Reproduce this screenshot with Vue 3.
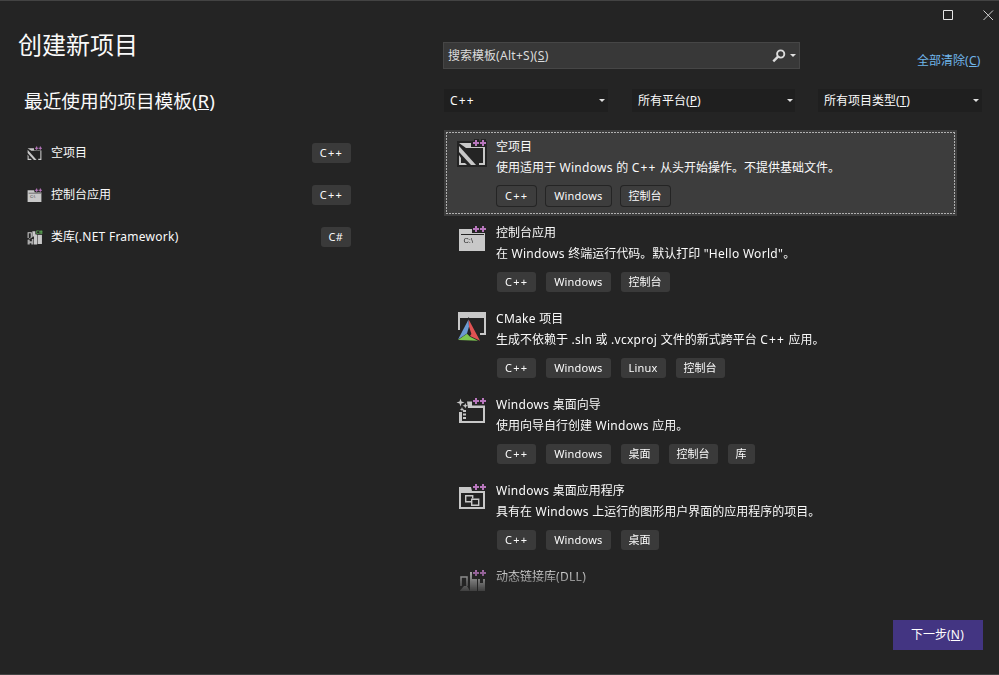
<script setup>
import { h, ref } from 'vue'

const recent = [
  { name: '空项目', icon: 'empty', lang: 'C++' },
  { name: '控制台应用', icon: 'console', lang: 'C++' },
  { name: '类库(.NET Framework)', icon: 'library', lang: 'C#' }
]

const filters = [
  { text: 'C++' },
  { text: '所有平台', key: 'P' },
  { text: '所有项目类型', key: 'T' }
]

const templates = [
  { name: '空项目', icon: 'empty', desc: '使用适用于 Windows 的 C++ 从头开始操作。不提供基础文件。', tags: ['C++', 'Windows', '控制台'] },
  { name: '控制台应用', icon: 'console', desc: '在 Windows 终端运行代码。默认打印 "Hello World"。', tags: ['C++', 'Windows', '控制台'] },
  { name: 'CMake 项目', icon: 'cmake', desc: '生成不依赖于 .sln 或 .vcxproj 文件的新式跨平台 C++ 应用。', tags: ['C++', 'Windows', 'Linux', '控制台'] },
  { name: 'Windows 桌面向导', icon: 'wizard', desc: '使用向导自行创建 Windows 应用。', tags: ['C++', 'Windows', '桌面', '控制台', '库'] },
  { name: 'Windows 桌面应用程序', icon: 'desktop', desc: '具有在 Windows 上运行的图形用户界面的应用程序的项目。', tags: ['C++', 'Windows', '桌面'] },
  { name: '动态链接库(DLL)', icon: 'dll', desc: '', tags: [] }
]

const selected = ref(0)

// Latin runs get slightly wider tracking than the Chinese text around them
function Txt(props) {
  const parts = props.text.match(/C\+\+|[\x20-\x7e]+?(?=C\+\+|[^\x20-\x7e]|$)|[^\x20-\x7e]+/g) || []
  return h('span', { class: 'txt' }, parts.map(p => {
    const cls = p === 'C++' ? 'cpp' : /^[\x20-\x7e]/.test(p) ? 'latin' : 'han'
    return h('span', { class: cls }, p)
  }))
}
Txt.props = ['text']

const light = '#c8c8c8'
const dark = '#242424'
const rect = (x, y, width, height, fill = light) => h('rect', { x, y, width, height, fill })
const path = (d, fill = light, extra = {}) => h('path', { d, fill, ...extra })
const line = (d, stroke = light, w = 2) => path(d, 'none', { stroke, 'stroke-width': w })

const plus = () => [
  path('M16 4h2V2h5v2h2V2h5v2h1v4h-1v2h-5V8h-2v2h-5V8h-2z', dark),
  path('M19 3h2v2h2v2h-2v2h-2V7h-2V5h2zM26 3h2v2h2v2h-2v2h-2V7h-2V5h2z', '#b877bd')
]

const art = {
  empty: () => [
    rect(1, 4, 30, 26, dark),
    path('M3 6h12v4h14v18h-6v-2h4V11H10z'),
    path('M3 9l17 19h-5L3 15z'),
    path('M3 18l2 3v5h4l2 2H3z'),
    ...plus()
  ],
  console: () => [
    path('M3 6h13v4h13v18H3z'),
    rect(5, 11, 23, 1, dark),
    h('text', { x: 7.4, y: 20, fill: dark, 'font-size': 7.5, 'font-family': 'Liberation Sans, sans-serif' }, 'C:\\'),
    ...plus()
  ],
  cmake: () => [
    rect(2, 3, 28, 6),
    line('M3 8v13M29 8v17h-5'),
    path('M12.7 8L0 31h26z', dark),
    path('M12.5 10.5L2 30.5l9-6 2-7z', '#6c9bd2'),
    path('M12.7 10.5L24 31.7l-10-4.7 1.4-2-2.4-7.5z', '#e05252'),
    path('M2 31l9-6.3 3 3 8 4z', '#7ec850')
  ],
  wizard: () => [
    path('M11 6.5h5v4h13V28H3V17h3v9h21V13H12z'),
    path('M7 15h3v2H7zM7 18.5h3v2H7zM7 22h3v2H7z'),
    path('M4.5 3.5l1 3 3 1-3 1-1 3-1-3-3-1 3-1zM9.3 8l.8 2 2 .8-2 .8-.8 2-.8-2-2-.8 2-.8zM6 12l.6 1.7 1.7.6-1.7.6L6 16.6l-.6-1.7-1.7-.6 1.7-.6z'),
    ...plus()
  ],
  desktop: () => [
    path('M3 6h12l1 4h13v18H3zM5 12v14h22V12z', light, { 'fill-rule': 'evenodd' }),
    line('M9.7 14.7h7v6h-7z', light, 1.4),
    rect(15, 17.5, 8, 7.5, dark),
    line('M15.7 18.2h7v6h-7z', light, 1.4),
    ...plus()
  ],
  dll: () => [
    line('M5 19V10h6v9', light, 1.5),
    path('M2 26l6-7h3l3 5v4H2zM14 5h2v22h-2zM16 12h5v15h-5zM22 12h2v4h3v-4h2v16h-7z'),
    ...plus()
  ],
  library: () => [
    line('M4 17V7h6v9', light, 2),
    path('M12 4h6v6h3v19h-6V14h-3zM22 11h8v17h-8z'),
    path('M3 20h4v3h4v-4h3v10h-4v-2H7v2H3z', '#aaa'),
    line('M5 19l8-5', '#aaa', 1.5),
    path('M18 2h13v8H18z', dark),
    line('M24 3.5h-4v5h4M26.5 2.5v7M29.5 2.5v7M25 4.5h6M25 7.5h6', '#5fae57', 1.4)
  ]
}

function Icon(props) {
  return h('svg', { viewBox: '0 0 32 32', width: props.size, height: props.size }, art[props.name]())
}
Icon.props = ['name', 'size']
</script>

<template>
  <div class="dialog">
    <aside class="side">
      <h1>创建新项目</h1>
      <h2>最近使用的项目模板(<u>R</u>)</h2>
      <ul class="recent">
        <li v-for="r in recent" :key="r.name">
          <Icon :name="r.icon" :size="17" />
          <Txt class="recent-name" :text="r.name" />
          <span class="tag"><Txt :text="r.lang" /></span>
        </li>
      </ul>
    </aside>

    <main class="main">
      <div class="controls">
        <svg width="11" height="11" viewBox="0 0 11 11"><path d="M.5.5h9v9h-9z" fill="none" stroke="#e6e6e6" /></svg>
        <svg width="11" height="11" viewBox="0 0 11 11"><path d="M.5.5l9.5 9.5M10 .5L.5 10" fill="none" stroke="#d0d0d0" /></svg>
      </div>

      <div class="search-row">
        <div class="search">
          <span class="search-text">搜索模板<span class="latin">(Alt+S)(<u>S</u>)</span></span>
          <svg width="14" height="14" viewBox="0 0 14 14">
            <circle cx="8.7" cy="5" r="3.6" fill="none" stroke="#dcdcdc" stroke-width="1.9" />
            <path d="M6 7.7L1.3 12.4" stroke="#dcdcdc" stroke-width="2.4" />
          </svg>
          <i class="arrow"></i>
        </div>
        <a class="clear">全部清除<span class="latin">(<u>C</u>)</span></a>
      </div>

      <div class="filters">
        <div v-for="f in filters" :key="f.text" class="combo">
          <span><Txt :text="f.text" /><template v-if="f.key">(<u>{{ f.key }}</u>)</template></span>
          <i class="arrow"></i>
        </div>
      </div>

      <ul class="list">
        <li
          v-for="(t, i) in templates"
          :key="t.name"
          class="item"
          :class="{ selected: i === selected }"
          @click="selected = i"
        >
          <Icon :name="t.icon" :size="32" />
          <div class="info">
            <Txt class="name" :text="t.name" />
            <Txt class="desc" :text="t.desc" />
            <div class="tags">
              <span v-for="tag in t.tags" :key="tag" class="tag"><Txt :text="tag" /></span>
            </div>
          </div>
        </li>
      </ul>

      <div class="footer">
        <button class="next">下一步<span class="latin">(<u>N</u>)</span></button>
      </div>
    </main>
  </div>
</template>

<style>
body {
  margin: 0;
  background: #242424;
}
</style>

<style scoped>
.dialog {
  display: flex;
  box-sizing: border-box;
  width: 999px;
  height: 675px;
  overflow: hidden;
  background: #242424;
  border-top: 1px solid #434343;
  border-bottom: 1px solid #434343;
  color: #fafafa;
  font: 12px/18px "Noto Sans", "Noto Sans CJK SC", sans-serif;
  white-space: pre;
}

u {
  text-underline-offset: 1px;
  text-decoration-thickness: 1px;
}

ul {
  list-style: none;
  margin: 0;
  padding: 0;
}

svg {
  display: block;
  flex: none;
}

:deep(.latin),
.latin {
  letter-spacing: 0.3px;
}

:deep(.cpp) {
  letter-spacing: 1.2px;
}

.side {
  width: 443px;
  flex: none;
}

h1 {
  margin: 26px 0 0 18px;
  font-size: 24px;
  line-height: 36px;
  font-weight: 400;
}

h2 {
  margin: 24px 0 0 24px;
  font-size: 18.67px;
  line-height: 28px;
  font-weight: 400;
}

.recent {
  width: 325px;
  margin: 17px 0 0 26px;
}

.recent li {
  display: flex;
  align-items: center;
  height: 42px;
}

.recent-name {
  margin-left: 8px;
  flex: 1;
}

.recent :deep(.latin) {
  letter-spacing: 0.25px;
}

.tag {
  box-sizing: border-box;
  height: 20px;
  padding: 0 8px;
  border-radius: 3px;
  background: #3a3a3a;
  font-size: 11px;
  line-height: 20px;
}

.tag :deep(.latin) {
  letter-spacing: 0.2px;
}

.main {
  flex: 1;
  display: flex;
  flex-direction: column;
}

.controls {
  display: flex;
  justify-content: flex-end;
  gap: 29px;
  height: 32px;
  padding: 9px 5px 0 0;
}

.search-row {
  display: flex;
  height: 27px;
}

.search {
  box-sizing: border-box;
  display: flex;
  align-items: center;
  width: 357px;
  padding: 0 3px 0 4px;
  background: #383838;
  border: 1px solid #464646;
  color: #dcdcdc;
}

.search-text {
  flex: 1;
}

.search .arrow {
  margin-left: 4px;
}

.clear {
  margin: 10px 0 0 117px;
  color: #70b5ea;
}

.arrow {
  border: 3px solid transparent;
  border-top-color: #e0e0e0;
  border-bottom: 0;
}

.filters {
  display: flex;
  gap: 23px;
  margin: 20px 0 0 1px;
}

.combo {
  box-sizing: border-box;
  display: flex;
  align-items: center;
  justify-content: space-between;
  width: 164px;
  height: 23px;
  padding: 0 3px 0 6px;
  background: #1f1f1f;
}

.combo:nth-child(2) {
  width: 163px;
  margin-left: 1px;
  padding-right: 2px;
}

.list {
  width: 513px;
  height: 461px;
  margin: 18px 0 0 1px;
  overflow: hidden;
  -webkit-mask-image: linear-gradient(#000 436px, transparent 466px);
  mask-image: linear-gradient(#000 436px, transparent 466px);
}

.item {
  display: flex;
  box-sizing: border-box;
  height: 86px;
  padding: 7px 0 0 12px;
}

/* focus rectangle, 2px dash and 1px gap */
.item.selected {
  --h: repeating-linear-gradient(90deg, #b0b0b0 0 2px, transparent 2px 3px);
  --v: repeating-linear-gradient(#b0b0b0 0 2px, transparent 2px 3px);
  background:
    var(--h) 2px 2px / 509px 1px no-repeat,
    var(--h) 2px 83px / 509px 1px no-repeat,
    var(--v) 2px 2px / 1px 82px no-repeat,
    var(--v) 510px 2px / 1px 82px no-repeat,
    #3d3d3d;
}

.info {
  display: flex;
  flex-direction: column;
  margin-left: 8px;
  padding-top: 1px;
}

.desc {
  margin-top: 3px;
}

.tags {
  display: flex;
  gap: 10px;
  margin: 9px 0 0 1px;
}

.selected .tag {
  box-shadow: 0 0 0 1px #242424;
  background: #3d3d3d;
}

.footer {
  display: flex;
  justify-content: flex-end;
  margin: 29px 16px 0 0;
}

.next {
  width: 90px;
  height: 30px;
  padding: 0 1px 0 0;
  border: 0;
  background: #433582;
  color: #fff;
  font: inherit;
}
</style>
